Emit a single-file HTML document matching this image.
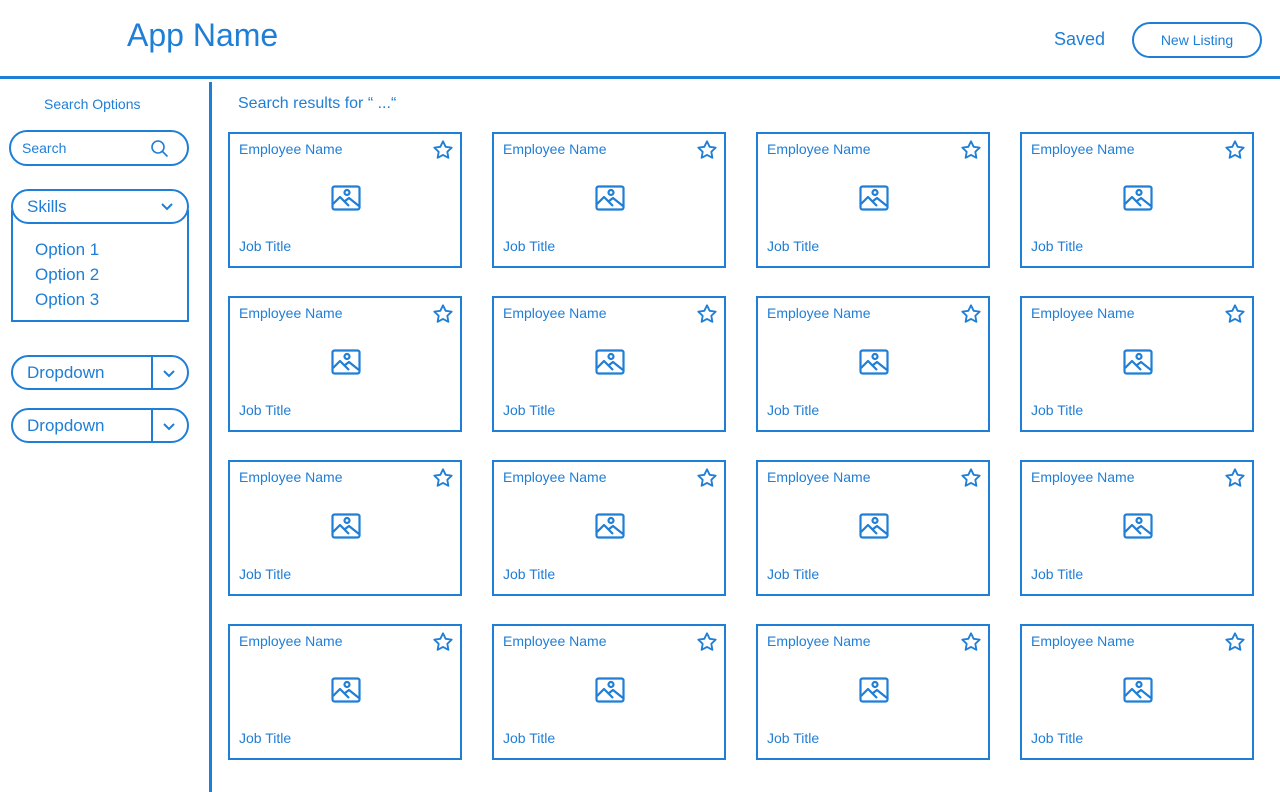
<!DOCTYPE html>
<html><head><style>
*{margin:0;padding:0;box-sizing:border-box}
body{width:1280px;height:792px;background:#fff;position:relative;overflow:hidden;font-family:"Liberation Sans",sans-serif;color:#1f7ed6}
.a{position:absolute}
.card{position:absolute;width:234px;height:136px;border:2.5px solid #1f7ed6}
.card .n{position:absolute;left:9px;top:7px;font-size:14px}
.card .j{position:absolute;left:9px;top:104px;font-size:14px}
.card svg.s{position:absolute;right:6px;top:5px}
.card svg.i{position:absolute;left:101px;top:51px}
.pill{position:absolute;border:2px solid #1f7ed6;border-radius:18px}
</style></head><body>
<div class="a" style="left:127px;top:17px;font-size:32px">App Name</div>
<div class="a" style="left:1054px;top:29px;font-size:18px">Saved</div>
<div class="pill" style="left:1132px;top:22px;width:130px;height:36px;font-size:14px;text-align:center;line-height:32px">New Listing</div>
<div class="a" style="left:0;top:76px;width:1280px;height:3px;background:#1f7ed6"></div>
<div class="a" style="left:209px;top:82px;width:3px;height:710px;background:#1f7ed6"></div>
<div class="a" style="left:44px;top:96px;font-size:14px">Search Options</div>
<div class="pill" style="left:9px;top:130px;width:180px;height:36px;font-size:14px;padding-left:11px;line-height:32px">Search
<svg class="a" style="left:139px;top:7px" width="20" height="20" viewBox="0 0 20 20" fill="none" stroke="#1f7ed6" stroke-width="1.6"><circle cx="8" cy="8" r="6"/><path d="M12.5 12.5l5 5"/></svg></div>
<div class="a" style="left:11px;top:210px;width:178px;height:112px;border:2.5px solid #1f7ed6"></div>
<div class="pill" style="left:11px;top:189px;width:178px;height:35px;background:#fff;font-size:17px;padding-left:14px;line-height:31px">Skills
<svg class="a" style="left:148px;top:12px" width="12" height="8" viewBox="0 0 12 8" fill="none" stroke="#1f7ed6" stroke-width="2"><path d="M1 1l5 5 5-5"/></svg></div>
<div class="a" style="left:35px;top:237px;font-size:17px;line-height:25px">Option 1<br>Option 2<br>Option 3</div>
<div class="pill" style="left:11px;top:355px;width:178px;height:35px;font-size:17px;padding-left:14px;line-height:31px">Dropdown
<div class="a" style="left:138px;top:0;width:2px;height:31px;background:#1f7ed6"></div>
<svg class="a" style="left:150px;top:13px" width="12" height="8" viewBox="0 0 12 8" fill="none" stroke="#1f7ed6" stroke-width="2"><path d="M1 1l5 5 5-5"/></svg></div>
<div class="pill" style="left:11px;top:408px;width:178px;height:35px;font-size:17px;padding-left:14px;line-height:31px">Dropdown
<div class="a" style="left:138px;top:0;width:2px;height:31px;background:#1f7ed6"></div>
<svg class="a" style="left:150px;top:13px" width="12" height="8" viewBox="0 0 12 8" fill="none" stroke="#1f7ed6" stroke-width="2"><path d="M1 1l5 5 5-5"/></svg></div>
<div class="a" style="left:238px;top:95px;font-size:16px">Search results for “ ...“</div>
<div id="g"></div>
<script>
var h='';
var star='<svg class="s" width="22" height="22" viewBox="0 0 24 24" fill="none" stroke="#1f7ed6" stroke-width="2" stroke-linejoin="round"><path d="M12 2.5l2.9 6 6.6.9-4.8 4.6 1.2 6.5L12 17.4 6.1 20.5l1.2-6.5L2.5 9.4l6.6-.9z"/></svg>';
var img='<svg class="i" width="30" height="26" viewBox="0 0 30 26" fill="none" stroke="#1f7ed6" stroke-width="2.2" stroke-linejoin="round"><rect x="1.5" y="1.5" width="27" height="23" rx="2"/><circle cx="16" cy="7.5" r="2.5"/><path d="M2 19l7-7 9 9M14 16l4-3 10 8"/></svg>';
for(var r=0;r<4;r++)for(var c=0;c<4;c++){
h+='<div class="card" style="left:'+(228+c*264)+'px;top:'+(132+r*164)+'px"><div class="n">Employee Name</div>'+star+img+'<div class="j">Job Title</div></div>';}
document.getElementById('g').innerHTML=h;
</script>
</body></html>
